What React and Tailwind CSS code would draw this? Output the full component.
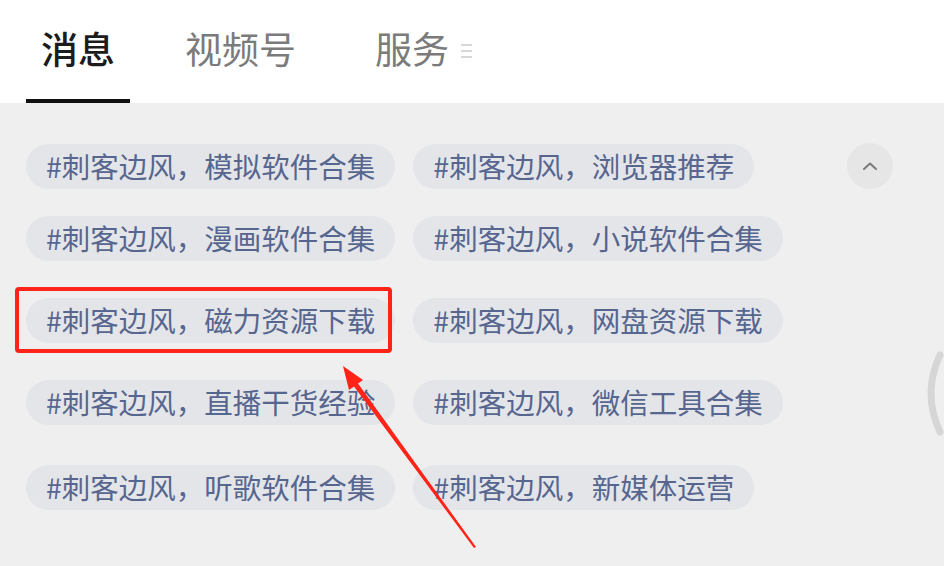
import React from 'react';

const rows = [
  ['模拟软件合集', '浏览器推荐'],
  ['漫画软件合集', '小说软件合集'],
  ['磁力资源下载', '网盘资源下载'],
  ['直播干货经验', '微信工具合集'],
  ['听歌软件合集', '新媒体运营'],
];

// top margin of each row, measured from the previous row
const rowMargins = ['mt-[40px]', 'mt-[27px]', 'mt-[37px]', 'mt-[37px]', 'mt-[40px]'];

function Chip({ text }) {
  return (
    <div className="h-[45px] px-[20px] rounded-full bg-[#e4e5e9] flex items-center text-[28.5px] leading-none text-[#56668f] whitespace-nowrap">
      #刺客边风，{text}
    </div>
  );
}

export default function App() {
  return (
    <div
      className="relative w-[944px] h-[566px] overflow-hidden bg-[#efefef]"
      style={{ fontFamily: '"Noto Sans CJK SC", "Noto Sans", sans-serif' }}
    >
      {/* Tabs header */}
      <div className="h-[103px] bg-white flex items-start">
        <div className="ml-[26px] w-[104px] h-[103px] flex flex-col items-center">
          <div className="mt-[28px] text-[37px] leading-[40px] font-medium text-[#1c1c1c]">消息</div>
          <div className="mt-auto w-full h-[4px] bg-[#111]" />
        </div>
        <div className="ml-[55px] mt-[28px] text-[37px] leading-[40px] text-[#7b7b7b]">视频号</div>
        <div className="ml-[79px] mt-[28px] text-[37px] leading-[40px] text-[#7b7b7b]">服务</div>
        <div className="ml-[12px] mt-[44px] flex flex-col gap-[4px]">
          <div className="w-[11px] h-[2px] bg-[#d8d8d8]" />
          <div className="w-[11px] h-[2px] bg-[#d8d8d8]" />
          <div className="w-[11px] h-[2px] bg-[#d8d8d8]" />
        </div>
      </div>

      {/* Topic chips */}
      <div className="pl-[26px]">
        {rows.map((r, i) => (
          <div key={i} className={`${rowMargins[i]} flex items-center gap-[18px]`}>
            <Chip text={r[0]} />
            <Chip text={r[1]} />
            {i === 0 && (
              <button className="ml-auto mr-[51px] w-[46px] h-[46px] rounded-full bg-[#e6e6e6] flex items-center justify-center">
                <svg width="16" height="10" viewBox="0 0 16 10" fill="none">
                  <path d="M2 8 L8 2.5 L14 8" stroke="#7a7a7a" strokeWidth="2" strokeLinecap="round" strokeLinejoin="round" />
                </svg>
              </button>
            )}
          </div>
        ))}
      </div>

      {/* scroll indicator on the right edge */}
      <svg className="absolute left-0 top-0 pointer-events-none" width="944" height="566">
        <path d="M940 355 Q922 393 940 432" stroke="#d6d6d6" strokeWidth="7" fill="none" strokeLinecap="round" />
      </svg>

      {/* red annotation box + arrow */}
      <div className="absolute left-[15px] top-[287px] w-[377px] h-[66px] border-[4px] border-[#ff2318] rounded-[4px]" />
      <svg className="absolute left-0 top-0 pointer-events-none" width="944" height="566">
        <polygon
          fill="#ff2318"
          points="343,366 363,380 358,383.5 476,547 474,548 354,386.5 349,390"
        />
      </svg>
    </div>
  );
}
